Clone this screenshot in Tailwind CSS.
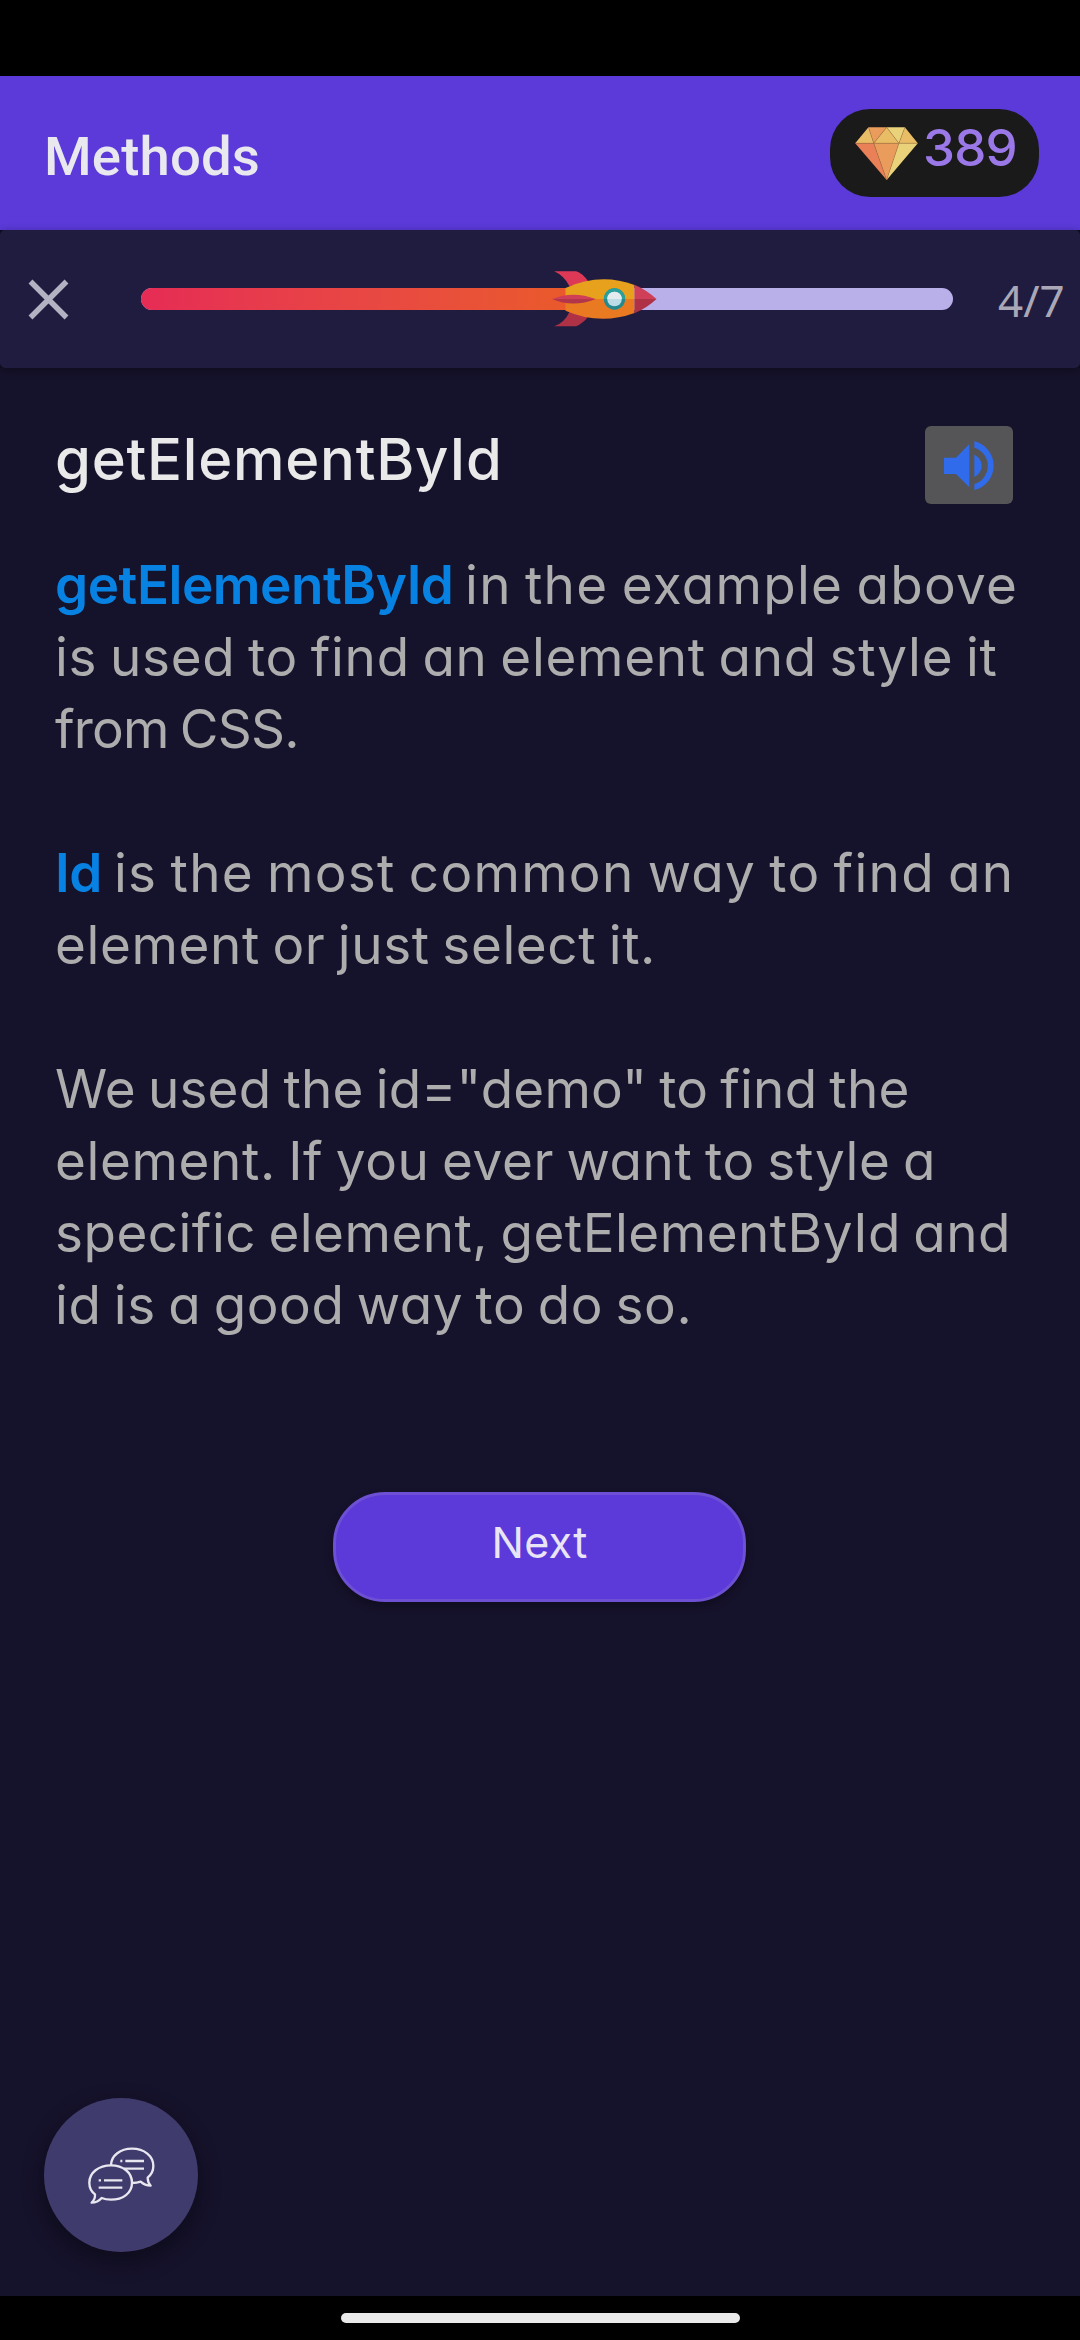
<!DOCTYPE html>
<html lang="en">
<head>
<meta charset="utf-8">
<title>Methods</title>
<script src="https://cdn.jsdelivr.net/npm/@tailwindcss/browser@4"></script>
</head>
<body class="bg-black">
<div class="flex h-[2340px] w-[1080px] flex-col overflow-hidden bg-[#15122b] font-['Inter',sans-serif] [font-feature-settings:'cv11']">
  <div class="h-[76px] shrink-0 bg-black"></div>

  <header class="flex h-[154px] shrink-0 items-center justify-between bg-[#5b3ad9] pr-[41px] pl-11">
    <h1 class="pt-[6px] font-['Roboto',sans-serif] text-[54.5px] leading-none font-medium tracking-[0.15px] text-[#e9e8ee]">Methods</h1>
    <div class="flex h-[88px] w-[209px] items-center rounded-[40px] bg-[#1a1a1a] pl-[25px]">
      <svg class="h-[53px] w-[63px] shrink-0" viewBox="135 167 189 160">
        <path fill="#e9bc66" d="M175 168L135 216H191zM285 168L324 216H267zM230 168L191 216H267z"/>
        <path fill="#e99c5b" d="M175 168H230L191 216zM191 216H267L230 327z"/>
        <path fill="#e9d27a" d="M230 168H285L267 216zM267 216H324L230 327z"/>
        <path fill="#e98057" d="M135 216H191L230 327z"/>
        <path fill="none" stroke="#a87440" stroke-opacity=".65" stroke-width="2" d="M135 216H324M175 168L191 216L230 327L267 216L285 168M191 216L230 168L267 216"/>
      </svg>
      <span class="pb-3 pl-[5px] text-[51px] leading-none font-medium tracking-[-0.8px] text-[#9b78e8]">389</span>
    </div>
  </header>

  <div class="shrink-0 bg-[#100e20]">
    <section class="flex h-[138px] items-center rounded-[5px] bg-[#1f1c40] pl-7 shadow-[0_2px_8px_rgba(0,0,0,0.35)]">
      <svg class="size-[41px] shrink-0" viewBox="0 0 41 41"><path fill="none" stroke="#b3b2c2" stroke-width="5.500" d="M2.5 2.5L38.500 38.500M38.500 2.500L2.500 38.500"/></svg>
      <div class="relative ml-[72px] h-[22px] w-[812px] shrink-0 rounded-full bg-[#b9b0ea]">
        <div class="h-full w-[464px] rounded-l-full bg-linear-to-r from-[#e62b55] to-[#ea5d24]"></div>
        <svg class="absolute top-[-17px] left-[411px] h-14 w-[105px]" viewBox="66 62 314 168">
          <path fill="#dd3957" d="M72 63H138Q156 68 175 94L118 108Q102 76 72 63z"/>
          <path fill="#ae3145" d="M72 228H138Q158 220 175 198L118 184Q104 216 72 228z"/>
          <path fill="#e7a11c" d="M106 146V113Q210 66 313 104V146z"/>
          <path fill="#e97a21" d="M106 146V181Q210 226 313 188V146z"/>
          <path fill="#cf3f57" d="M313 103Q350 119 379 146H313z"/>
          <path fill="#ae3145" d="M313 189Q350 173 379 146H313z"/>
          <path fill="#cf3f57" d="M66 146Q128 120 197 146z"/>
          <path fill="#b23549" d="M66 146Q128 173 197 146z"/>
          <circle cx="253" cy="146" r="32" fill="#23898c"/>
          <path fill="#2aa09c" d="M221 146a32 32 0 0 1 64 0z"/>
          <circle cx="253" cy="146" r="22" fill="#bcdce7"/>
          <path fill="#e4ebee" d="M231 146a22 22 0 0 1 44 0z"/>
        </svg>
      </div>
      <span class="ml-[45px] pt-px font-['Noto_Sans',sans-serif] text-[44px] leading-none text-[#aaa8b6]">4/7</span>
    </section>
  </div>

  <main class="flex grow flex-col pl-[55px]">
    <div class="flex justify-between pt-[54px] pr-[67px]">
      <h2 class="pt-px text-[58px] leading-[72px] font-medium tracking-[0.75px] text-[#e9e9ea]">getElementById</h2>
      <button class="mt-1 flex h-[78px] w-[88px] items-center justify-center rounded-[6px] bg-[#555557]">
        <svg class="h-[49px] w-[51px]" viewBox="131 661 153 147" fill="#2f6bea">
          <path d="M131 711H167L207 670V800L167 760H131z"/>
          <path d="M222 702Q244 713 244 735T222 769z"/>
          <path d="M222 662A75 75 0 0 1 222 808V790A57 57 0 0 0 222 681z"/>
        </svg>
      </button>
    </div>
    <div class="mt-[45px] flex flex-col gap-[72px] text-[53px] leading-[72px] whitespace-nowrap text-[#adadae] [word-spacing:-3px]">
      <p>
        <span class="flex"><b class="w-[410px] font-semibold tracking-[-0.46px] text-[#0882e2]">getElementById</b><span class="tracking-[1.3px]">in the example above</span></span>
        <span class="block tracking-[0.72px]">is used to find an element and style it</span>
        <span class="block tracking-[-0.79px]">from CSS.</span>
      </p>
      <p>
        <span class="flex"><b class="w-[59px] font-semibold tracking-[-0.5px] text-[#0882e2]">Id</b><span class="tracking-[1.27px]">is the most common way to find an</span></span>
        <span class="block tracking-[0.61px]">element or just select it.</span>
      </p>
      <p>
        <span class="block tracking-[0.19px]">We used the id="demo" to find the</span>
        <span class="block tracking-[0.61px]">element. If you ever want to style a</span>
        <span class="block tracking-[0.48px]">specific element, getElementById and</span>
        <span class="block tracking-[0.55px]">id is a good way to do so.</span>
      </p>
    </div>
    <button class="mt-[151px] ml-[278px] h-[110px] w-[413px] rounded-[52px] border-[3px] border-[#6d50d3] bg-[#5b3ad9] pb-[9px] text-[43px] leading-none tracking-[0.3px] text-[#e9e5f6] shadow-[0_4px_8px_rgba(0,0,0,0.3)]">Next</button>
    <button class="mt-auto mb-11 ml-[-11px] flex size-[154px] items-center justify-center rounded-full bg-[#3f3b6d] shadow-[0_8px_22px_rgba(0,0,0,0.4)]">
      <svg class="h-[57px] w-[67px]" viewBox="173 199 201 171" fill="none" stroke="#e8e7f0" stroke-width="7" stroke-linejoin="round">
        <path d="M242 253C243 224 270 204 305 204C342 204 369 226 369 256C369 271 363 282 352 291Q352 305 361 315Q344 315 331 303Q320 307 305 307"/>
        <path d="M242 254C279 254 305 276 305 306C305 337 278 357 242 357Q226 357 214 352Q202 366 184 366Q195 356 194 341C182 332 177 321 177 306C177 276 205 254 242 254z"/>
        <path d="M270 241H276M285 241H341M281 264H341M205 299H212M221 299H276M205 321H276"/>
      </svg>
    </button>
  </main>

  <footer class="flex h-11 shrink-0 justify-center bg-black pt-[17px]">
    <div class="h-[10px] w-[399px] rounded-full bg-[#e9e9e9]"></div>
  </footer>
</div>
</body>
</html>
